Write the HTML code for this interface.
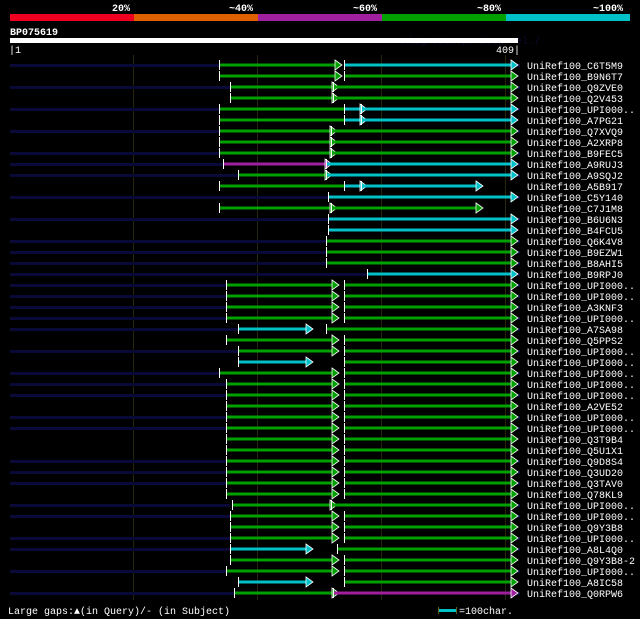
<!DOCTYPE html>
<html><head><meta charset="utf-8"><style>
html,body{margin:0;padding:0;background:#000;}
svg{display:block;}
text{font-family:"Liberation Mono","DejaVu Sans Mono",monospace;font-size:10px;fill:#fff;}
</style></head><body>
<svg id="s" width="640" height="619" xmlns="http://www.w3.org/2000/svg">
<rect width="640" height="619" fill="#000"/>
<text x="112" y="11" font-weight="bold" font-size="11">20%</text>
<text x="229" y="11" font-weight="bold" font-size="11">~40%</text>
<text x="353" y="11" font-weight="bold" font-size="11">~60%</text>
<text x="477" y="11" font-weight="bold" font-size="11">~80%</text>
<text x="593" y="11" font-weight="bold" font-size="11">~100%</text>
<rect x="10" y="14" width="124" height="7" fill="#f00020"/>
<rect x="134" y="14" width="124" height="7" fill="#e06000"/>
<rect x="258" y="14" width="124" height="7" fill="#a020a0"/>
<rect x="382" y="14" width="124" height="7" fill="#00a000"/>
<rect x="506" y="14" width="124" height="7" fill="#00c0c8"/>
<text x="10" y="35" font-weight="bold" font-size="11">BP075619</text>
<text x="402" y="44" style="fill:#0a0a30">AlignView.pm Beta rel.7</text>
<rect x="10" y="38" width="508" height="5" fill="#fff"/>
<text x="9" y="53">|1</text>
<text x="496" y="53">409|</text>
<g stroke="#262608" stroke-width="1">
<line x1="133.5" y1="55" x2="133.5" y2="600"/><line x1="257.5" y1="55" x2="257.5" y2="600"/>
<line x1="381.5" y1="55" x2="381.5" y2="600"/><line x1="505.5" y1="55" x2="505.5" y2="600"/>
</g>
<g id="rows"></g>
<g id="labels">
<text x="527" y="69">UniRef100_C6T5M9</text><text x="527" y="80">UniRef100_B9N6T7</text><text x="527" y="91">UniRef100_Q9ZVE0</text><text x="527" y="102">UniRef100_Q2V453</text><text x="527" y="113">UniRef100_UPI000..</text><text x="527" y="124">UniRef100_A7PG21</text><text x="527" y="135">UniRef100_Q7XVQ9</text><text x="527" y="146">UniRef100_A2XRP8</text><text x="527" y="157">UniRef100_B9FEC5</text><text x="527" y="168">UniRef100_A9RUJ3</text><text x="527" y="179">UniRef100_A9SQJ2</text><text x="527" y="190">UniRef100_A5B917</text><text x="527" y="201">UniRef100_C5Y140</text><text x="527" y="212">UniRef100_C7J1M8</text><text x="527" y="223">UniRef100_B6U6N3</text><text x="527" y="234">UniRef100_B4FCU5</text><text x="527" y="245">UniRef100_Q6K4V8</text><text x="527" y="256">UniRef100_B9EZW1</text><text x="527" y="267">UniRef100_B8AHI5</text><text x="527" y="278">UniRef100_B9RPJ0</text><text x="527" y="289">UniRef100_UPI000..</text><text x="527" y="300">UniRef100_UPI000..</text><text x="527" y="311">UniRef100_A3KNF3</text><text x="527" y="322">UniRef100_UPI000..</text><text x="527" y="333">UniRef100_A7SA98</text><text x="527" y="344">UniRef100_Q5PPS2</text><text x="527" y="355">UniRef100_UPI000..</text><text x="527" y="366">UniRef100_UPI000..</text><text x="527" y="377">UniRef100_UPI000..</text><text x="527" y="388">UniRef100_UPI000..</text><text x="527" y="399">UniRef100_UPI000..</text><text x="527" y="410">UniRef100_A2VE52</text><text x="527" y="421">UniRef100_UPI000..</text><text x="527" y="432">UniRef100_UPI000..</text><text x="527" y="443">UniRef100_Q3T9B4</text><text x="527" y="454">UniRef100_Q5U1X1</text><text x="527" y="465">UniRef100_Q9D8S4</text><text x="527" y="476">UniRef100_Q3UD20</text><text x="527" y="487">UniRef100_Q3TAV0</text><text x="527" y="498">UniRef100_Q78KL9</text><text x="527" y="509">UniRef100_UPI000..</text><text x="527" y="520">UniRef100_UPI000..</text><text x="527" y="531">UniRef100_Q9Y3B8</text><text x="527" y="542">UniRef100_UPI000..</text><text x="527" y="553">UniRef100_A8L4Q0</text><text x="527" y="564">UniRef100_Q9Y3B8-2</text><text x="527" y="575">UniRef100_UPI000..</text><text x="527" y="586">UniRef100_A8IC58</text><text x="527" y="597">UniRef100_Q0RPW6</text>
</g>
<text x="8" y="614">Large gaps:▲(in Query)/- (in Subject)</text>
<line x1="438.5" y1="607" x2="438.5" y2="614" stroke="#606020"/>
<line x1="456.5" y1="607" x2="456.5" y2="614" stroke="#606020"/>
<rect x="439" y="609" width="17" height="3" fill="#00c0c8"/>
<text x="459" y="614">=100char.</text>
</svg>
<script>
var G='#00a000',C='#00c0c8',P='#a020a0';
var R=[
[219,[[219,336,G],[344,512,C]]],
[0,[[219,336,G],[344,512,G]]],
[230,[[230,333,G],[333,512,G]]],
[0,[[230,333,G],[333,512,G]]],
[219,[[219,344,G,0],[344,361,C],[361,512,C]]],
[0,[[219,344,G,0],[344,361,C],[361,512,C]]],
[219,[[219,331,G],[331,512,G]]],
[0,[[219,331,G],[331,512,G]]],
[219,[[219,331,G],[331,512,G]]],
[223,[[223,326,P],[326,512,C]]],
[238,[[238,326,G],[326,512,C]]],
[0,[[219,344,G,0],[344,361,C],[361,477,C]]],
[328,[[328,512,C]]],
[0,[[219,331,G],[331,477,G]]],
[328,[[328,512,C]]],
[0,[[328,512,C]]],
[326,[[326,512,G]]],
[326,[[326,512,G]]],
[326,[[326,512,G]]],
[367,[[367,512,C]]],
[226,[[226,333,G],[344,512,G]]],
[226,[[226,333,G],[344,512,G]]],
[226,[[226,333,G],[344,512,G]]],
[226,[[226,333,G],[344,512,G]]],
[238,[[238,307,C],[326,512,G]]],
[0,[[226,333,G],[344,512,G]]],
[238,[[238,333,G],[344,512,G]]],
[0,[[238,307,C],[344,512,G]]],
[219,[[219,333,G],[344,512,G]]],
[226,[[226,333,G],[344,512,G]]],
[226,[[226,333,G],[344,512,G]]],
[0,[[226,333,G],[344,512,G]]],
[226,[[226,333,G],[344,512,G]]],
[226,[[226,333,G],[344,512,G]]],
[0,[[226,333,G],[344,512,G]]],
[0,[[226,333,G],[344,512,G]]],
[226,[[226,333,G],[344,512,G]]],
[226,[[226,333,G],[344,512,G]]],
[226,[[226,333,G],[344,512,G]]],
[0,[[226,333,G],[344,512,G]]],
[230,[[232,331,G],[331,512,G]]],
[230,[[230,333,G],[344,512,G]]],
[0,[[230,333,G],[344,512,G]]],
[230,[[230,333,G],[344,512,G]]],
[230,[[230,307,C],[337,512,G]]],
[0,[[230,333,G],[344,512,G]]],
[226,[[226,333,G],[344,512,G]]],
[0,[[238,307,C],[344,512,G]]],
[234,[[234,333,G],[333,512,P]]]
];
var h='';
R.forEach(function(r,i){
 var y=65+i*11;
 if(r[0]) h+='<rect x="10" y="'+(y-1)+'" width="'+(r[0]-10)+'" height="3" fill="#0a0a38"/>';
 var last=r[1][r[1].length-1][1];
 if(r[0]&&last<520) h+='<rect x="'+last+'" y="'+(y-1)+'" width="'+(520-last)+'" height="3" fill="#0a0a38"/>';
 r[1].forEach(function(s){
  h+='<rect x="'+s[0]+'" y="'+(y-1.5)+'" width="'+(s[1]-s[0])+'" height="3" fill="'+s[2]+'"/>';
  h+='<line x1="'+(s[0]+0.5)+'" y1="'+(y-5)+'" x2="'+(s[0]+0.5)+'" y2="'+(y+5)+'" stroke="#fff"/>';
  if(s[3]!==0) h+='<path d="M'+(s[1]-1)+' '+(y-5)+'L'+(s[1]+6)+' '+y+'L'+(s[1]-1)+' '+(y+5)+'Z" fill="'+s[2]+'" stroke="#fff" stroke-width="0.8"/>';
 });
});
document.getElementById('rows').innerHTML=h;
</script>
</body></html>
